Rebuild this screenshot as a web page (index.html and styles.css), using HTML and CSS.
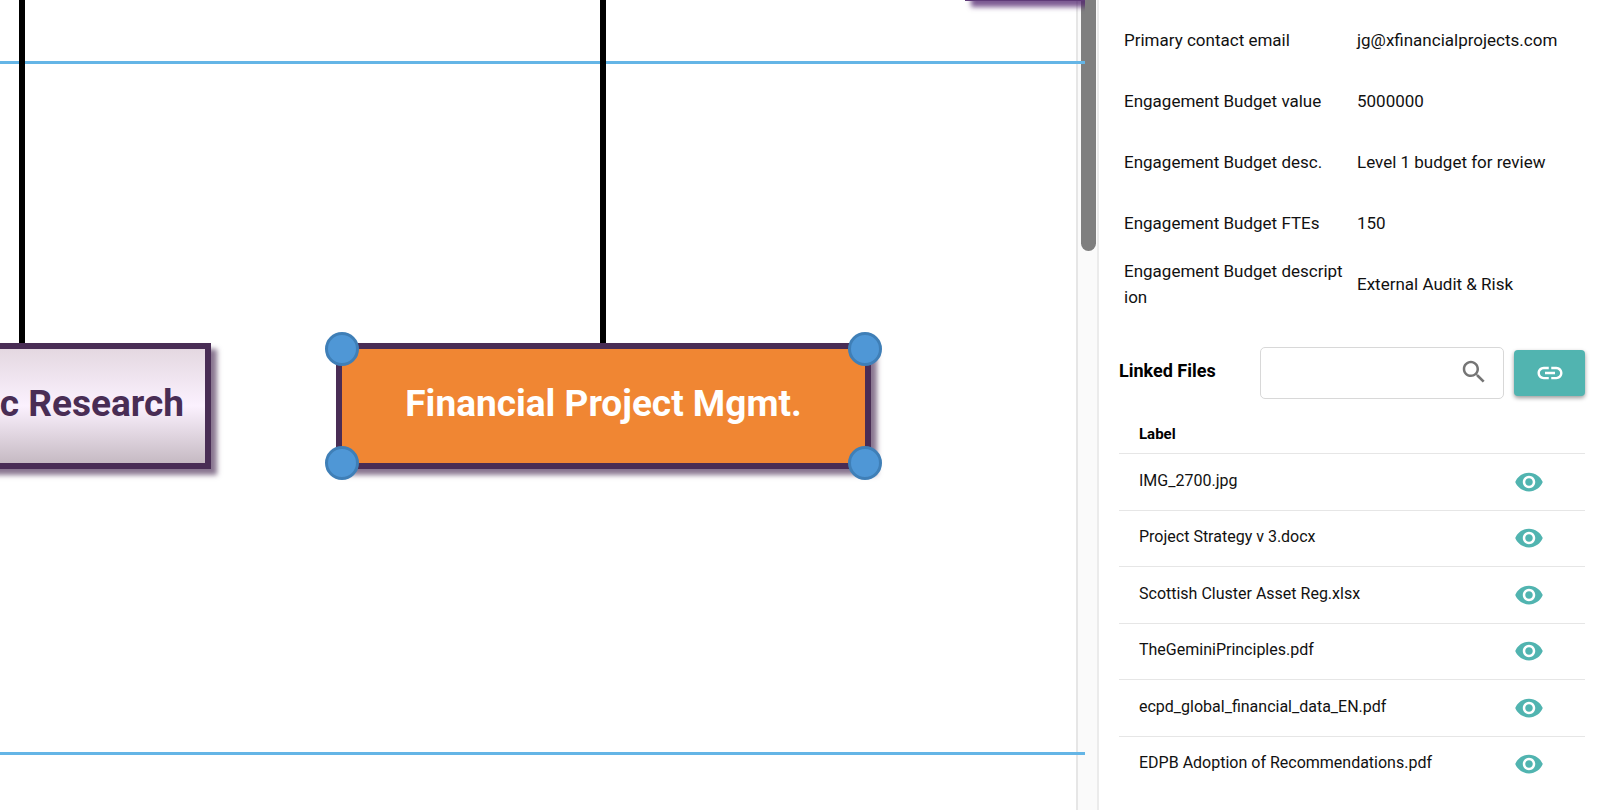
FILE: index.html
```
<!DOCTYPE html>
<html lang="en">
<head>
  <meta charset="UTF-8">
  <title>Financial Project Mgmt.</title>
  <link rel="stylesheet" href="styles.css">
</head>
<body>
  <svg class="sprite" aria-hidden="true">
    <symbol id="eye" viewBox="0 0 24 24">
      <path d="M12 4.5C7 4.5 2.73 7.610 1 12c1.73 4.390 6 7.5 11 7.5s9.270-3.110 11-7.5c-1.730-4.390-6-7.5-11-7.5zM12 17c-2.760 0-5-2.240-5-5s2.240-5 5-5 5 2.240 5 5-2.240 5-5 5zm0-8c-1.660 0-3 1.340-3 3s1.340 3 3 3 3-1.340 3-3-1.340-3-3-3z"/>
    </symbol>
  </svg>

  <main class="canvas">
    <div class="diagram">
      <div class="lane lane-top"></div>
      <div class="lane lane-bottom"></div>
      <div class="link link-left"></div>
      <div class="link link-right"></div>
      <div class="node node-corner"></div>
      <div class="node node-research">c Research</div>
      <div class="node node-finance">
        Financial Project Mgmt.
        <i class="handle tl"></i>
        <i class="handle tr"></i>
        <i class="handle bl"></i>
        <i class="handle br"></i>
      </div>
    </div>
  </main>

  <div class="track"><div class="thumb"></div></div>

  <aside class="panel">
    <dl class="props">
      <dt>Primary contact email</dt>
      <dd>jg@xfinancialprojects.com</dd>
      <dt>Engagement Budget value</dt>
      <dd>5000000</dd>
      <dt>Engagement Budget desc.</dt>
      <dd>Level 1 budget for review</dd>
      <dt>Engagement Budget FTEs</dt>
      <dd>150</dd>
      <dt>Engagement Budget description</dt>
      <dd>External Audit &amp; Risk</dd>
    </dl>

    <div class="files-bar">
      <label class="files-title" for="search">Linked Files</label>
      <div class="search">
        <input type="text" id="search">
        <svg viewBox="0 0 24 24"><path d="M15.5 14h-.79l-.28-.27C15.41 12.59 16 11.11 16 9.5 16 5.91 13.09 3 9.5 3S3 5.91 3 9.5 5.91 16 9.5 16c1.61 0 3.09-.59 4.23-1.57l.27.28v.79l5 4.99L20.49 19l-4.99-5zm-6 0C7.01 14 5 11.99 5 9.5S7.01 5 9.5 5 14 7.01 14 9.5 11.99 14 9.5 14z"/></svg>
      </div>
      <button class="btn-link" type="button" aria-label="Link file">
        <svg viewBox="0 0 24 24"><path d="M3.9 12c0-1.71 1.39-3.1 3.1-3.1h4V7H7c-2.76 0-5 2.24-5 5s2.24 5 5 5h4v-1.9H7c-1.71 0-3.1-1.39-3.1-3.1zM8 13h8v-2H8v2zm9-6h-4v1.9h4c1.71 0 3.1 1.39 3.1 3.1s-1.39 3.1-3.1 3.1h-4V17h4c2.76 0 5-2.24 5-5s-2.24-5-5-5z"/></svg>
      </button>
    </div>

    <table class="files">
      <thead>
        <tr><th>Label</th><th></th></tr>
      </thead>
      <tbody>
        <tr>
          <td>IMG_2700.jpg</td>
          <td><button type="button" aria-label="View"><svg><use href="#eye"/></svg></button></td>
        </tr>
        <tr>
          <td>Project Strategy v 3.docx</td>
          <td><button type="button" aria-label="View"><svg><use href="#eye"/></svg></button></td>
        </tr>
        <tr>
          <td>Scottish Cluster Asset Reg.xlsx</td>
          <td><button type="button" aria-label="View"><svg><use href="#eye"/></svg></button></td>
        </tr>
        <tr>
          <td>TheGeminiPrinciples.pdf</td>
          <td><button type="button" aria-label="View"><svg><use href="#eye"/></svg></button></td>
        </tr>
        <tr>
          <td>ecpd_global_financial_data_EN.pdf</td>
          <td><button type="button" aria-label="View"><svg><use href="#eye"/></svg></button></td>
        </tr>
        <tr>
          <td>EDPB Adoption of Recommendations.pdf</td>
          <td><button type="button" aria-label="View"><svg><use href="#eye"/></svg></button></td>
        </tr>
      </tbody>
    </table>
  </aside>
</body>
</html>
```

FILE: styles.css
```
* {
  box-sizing: border-box;
}

body {
  margin: 0;
  display: flex;
  min-height: 100vh;
  background: #fff;
  color: #111;
  font-family: Roboto, "Liberation Sans", sans-serif;
  font-size: 17px;
  line-height: 26px;
}

.sprite {
  display: none;
}

/* diagram */
.canvas {
  flex: 1;
  position: relative;
  z-index: 1;
}

/* runs a little way over the scroll track */
.diagram {
  position: absolute;
  top: 0;
  left: 0;
  right: -9px;
  bottom: 0;
  overflow: hidden;
}

.lane {
  position: absolute;
  left: 0;
  right: 0;
  height: 3px;
  background: #64b5e6;
}

.lane-top {
  top: 61px;
}

.lane-bottom {
  top: 752px;
}

.link {
  position: absolute;
  top: 0;
  width: 6px;
  height: 344px;
  background: #000;
}

.link-left {
  left: 19px;
}

.link-right {
  left: 600px;
}

.node {
  position: absolute;
  display: flex;
  align-items: center;
  justify-content: center;
  height: 126px;
  padding-bottom: 4px;
  border: 6px solid #492d55;
  box-shadow: 6px 6px 5px rgba(73, 45, 85, .65);
  font-size: 37px;
  font-weight: bold;
  line-height: 42px;
  white-space: nowrap;
}

.node-corner {
  top: -125px;
  left: 965px;
  width: 534px;
  border-color: #5f3a78;
  box-shadow: 6px 6px 5px rgba(80, 35, 110, .75);
}

.node-research {
  top: 343px;
  left: -167px;
  width: 378px;
  padding-right: 21px;
  justify-content: flex-end;
  color: #492d55;
  background: linear-gradient(#e4d8e1, #fbf1fe 50%, #c6bac3);
}

.node-finance {
  top: 343px;
  left: 336px;
  width: 535px;
  color: #fff;
  background: #f08633;
}

.handle {
  position: absolute;
  width: 34px;
  height: 34px;
  border: 3px solid #3f7fb7;
  border-radius: 50%;
  background: #4f97d6;
}

.tl,
.tr {
  top: -17px;
}

.bl,
.br {
  bottom: -17px;
}

.tl,
.bl {
  left: -17px;
}

.tr,
.br {
  right: -17px;
}

/* scroll track */
.track {
  width: 23px;
  padding-left: 3px;
  border-left: 2px solid #e6e6e6;
  border-right: 2px solid #ebebeb;
  background: #fafafa;
}

.thumb {
  width: 15px;
  height: 251px;
  border-radius: 0 0 8px 8px;
  background: #7f7f7f;
}

/* side panel */
.panel {
  width: 501px;
  padding: 9px 15px 0 20px;
}

.props {
  display: grid;
  grid-template-columns: 221px 1fr;
  grid-auto-rows: 61px;
  align-items: center;
  column-gap: 12px;
  margin: 0 0 33px;
  padding-left: 5px;
}

.props dt {
  word-break: break-all;
}

.props dd {
  margin: 0;
}

.files-bar {
  display: flex;
  align-items: center;
  gap: 10px;
}

.files-title {
  width: 131px;
  padding-bottom: 4px;
  font-size: 18px;
  font-weight: bold;
  color: #000;
}

.search {
  position: relative;
  flex: 1;
}

.search input {
  display: block;
  width: 100%;
  height: 52px;
  padding: 0 56px 0 16px;
  border: 1px solid #d8d8d8;
  border-radius: 5px;
  font: inherit;
}

.search svg {
  position: absolute;
  top: 10px;
  right: 15px;
  width: 30px;
  height: 30px;
  fill: #757575;
}

.btn-link {
  display: flex;
  align-items: center;
  justify-content: center;
  width: 71px;
  height: 46px;
  padding: 0;
  border: 0;
  border-radius: 4px;
  background: #51b4b0;
  box-shadow: 0 2px 4px rgba(0, 0, 0, .4);
  cursor: pointer;
}

.btn-link svg {
  width: 30px;
  height: 30px;
  fill: #fff;
}

.files {
  width: 100%;
  margin-top: 17px;
  border-collapse: collapse;
  font-size: 16px;
}

.files th,
.files td {
  height: 57px;
  padding: 0 0 2px 20px;
  border-bottom: 1px solid #e6e6e6;
  text-align: left;
}

.files tr:nth-child(even) td {
  height: 56px;
}

.files th {
  height: 37px;
  padding-bottom: 0;
  font-size: 15px;
  color: #000;
}

.files tr:last-child td {
  border-bottom: 0;
}

.files td:last-child {
  width: 91px;
  padding-bottom: 0;
}

.files button {
  display: block;
  padding: 0;
  border: 0;
  background: none;
  cursor: pointer;
}

.files button svg {
  display: block;
  width: 30px;
  height: 30px;
  fill: #51b4b0;
}
```
